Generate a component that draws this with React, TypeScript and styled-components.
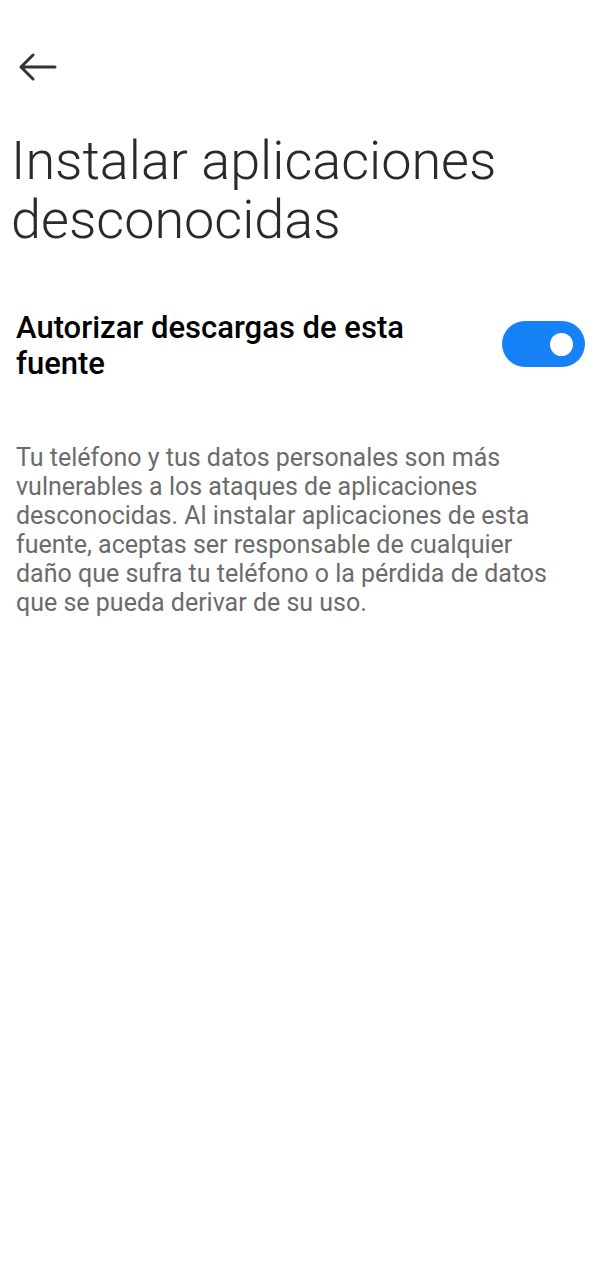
import React from 'react';
import styled, { createGlobalStyle } from 'styled-components';

const GlobalStyle = createGlobalStyle`
  html, body {
    margin: 0;
    padding: 0;
    background: #ffffff;
  }
  body {
    font-family: Roboto, "Noto Sans", "Liberation Sans", sans-serif;
    -webkit-font-smoothing: antialiased;
  }
`;

const Screen = styled.div`
  width: 600px;
  min-height: 1280px;
  background: #ffffff;
  display: flex;
  flex-direction: column;
`;

const TopBar = styled.div`
  height: 131px;
  display: flex;
  align-items: flex-start;
  padding: 52px 0 0 19px;
  box-sizing: border-box;
`;

const BackButton = styled.button`
  border: none;
  background: none;
  padding: 0;
  width: 40px;
  height: 30px;
  display: flex;
  align-items: center;
  cursor: pointer;
`;

const Title = styled.h1`
  margin: 0;
  padding: 0 20px 0 11px;
  font-weight: 300;
  font-size: 54px;
  line-height: 59px;
  color: #2a2a2a;
  letter-spacing: 0;
`;

const SettingRow = styled.div`
  display: flex;
  align-items: center;
  justify-content: space-between;
  padding: 0 15px 0 16px;
  margin-top: 61px;
`;

const SettingLabel = styled.div`
  font-weight: 500;
  font-size: 31px;
  line-height: 36px;
  color: #000000;
  max-width: 440px;
`;

const Track = styled.div<{ $on: boolean }>`
  width: 83px;
  height: 46px;
  margin-bottom: 4px;
  border-radius: 23px;
  background: ${(p) => (p.$on ? '#1781f7' : '#cfcfcf')};
  display: flex;
  align-items: center;
  justify-content: ${(p) => (p.$on ? 'flex-end' : 'flex-start')};
  padding: 0 12px;
  box-sizing: border-box;
  flex-shrink: 0;
`;

const Knob = styled.div`
  width: 23px;
  height: 23px;
  border-radius: 50%;
  background: #ffffff;
`;

const Description = styled.p`
  margin: 61px 0 0;
  padding: 0 45px 0 16px;
  font-size: 25px;
  line-height: 29px;
  color: #6b6b6b;
`;

const ArrowIcon = () => (
  <svg width="38" height="30" viewBox="0 0 38 30" fill="none">
    <path
      d="M14 3 L2 15 L14 27 M2 15 H36"
      stroke="#333333"
      strokeWidth="3"
      strokeLinecap="round"
      strokeLinejoin="round"
    />
  </svg>
);

export default function App() {
  const [on, setOn] = React.useState(true);
  return (
    <Screen>
      <GlobalStyle />
      <TopBar>
        <BackButton aria-label="Atrás">
          <ArrowIcon />
        </BackButton>
      </TopBar>
      <Title>Instalar aplicaciones desconocidas</Title>
      <SettingRow onClick={() => setOn(!on)}>
        <SettingLabel>Autorizar descargas de esta fuente</SettingLabel>
        <Track $on={on}>
          <Knob />
        </Track>
      </SettingRow>
      <Description>
        Tu teléfono y tus datos personales son más vulnerables a los ataques de
        aplicaciones desconocidas. Al instalar aplicaciones de esta fuente,
        aceptas ser responsable de cualquier daño que sufra tu teléfono o la
        pérdida de datos que se pueda derivar de su uso.
      </Description>
    </Screen>
  );
}
